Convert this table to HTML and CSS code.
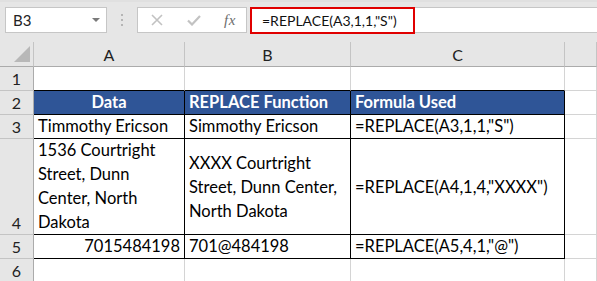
FILE: index.html
```html
<!DOCTYPE html>
<html lang="en">
<head>
<meta charset="utf-8">
<title>REPLACE function</title>
<link rel="stylesheet" href="styles.css">
</head>
<body>
<div class="toolbar">
  <div class="namebox">
    <span class="namebox-text">B3</span>
    <svg class="namebox-arrow" width="8" height="4" viewBox="0 0 8 4"><path d="M0 0H8L4 4Z" fill="#7a7a7a"/></svg>
  </div>
  <div class="grip">
    <svg width="3" height="12" viewBox="0 0 3 12"><rect x="0" y="0" width="2" height="2" fill="#b5b5b5"/><rect x="0" y="5" width="2" height="2" fill="#b5b5b5"/><rect x="0" y="10" width="2" height="2" fill="#b5b5b5"/></svg>
  </div>
  <div class="fbuttons">
    <svg class="fb-cancel" width="12" height="12" viewBox="0 0 12 12"><path d="M1 1L11 11M11 1L1 11" stroke="#c2c2c2" stroke-width="1.6" fill="none"/></svg>
    <svg class="fb-enter" width="14" height="11" viewBox="0 0 14 11"><path d="M1 5.5L5 9.5L13 1" stroke="#c2c2c2" stroke-width="2.2" fill="none"/></svg>
    <span class="fb-fx">fx</span>
  </div>
  <div class="formula">
    <div class="formula-edit">=REPLACE(A3,1,1,"S")</div>
  </div>
</div>

<div class="sheet">
  <div class="corner"><svg width="16" height="16" viewBox="0 0 16 16"><path d="M16 0V16H0Z" fill="#b8b8b8"/></svg></div>
  <div class="colhead">A</div>
  <div class="colhead">B</div>
  <div class="colhead">C</div>
  <div class="colhead"></div>

  <div class="rowhead">1</div>
  <div class="cell top-edge"></div>
  <div class="cell top-edge"></div>
  <div class="cell top-edge"></div>
  <div class="cell"></div>

  <div class="rowhead">2</div>
  <div class="cell tbl th center">Data</div>
  <div class="cell tbl th">REPLACE Function</div>
  <div class="cell tbl th">Formula Used</div>
  <div class="cell"></div>

  <div class="rowhead">3</div>
  <div class="cell tbl">Timmothy Ericson</div>
  <div class="cell tbl">Simmothy Ericson</div>
  <div class="cell tbl">=REPLACE(A3,1,1,"S")</div>
  <div class="cell"></div>

  <div class="rowhead">4</div>
  <div class="cell tbl wrap">1536 Courtright Street, Dunn Center, North Dakota</div>
  <div class="cell tbl wrap middle">XXXX Courtright Street, Dunn Center, North Dakota</div>
  <div class="cell tbl middle">=REPLACE(A4,1,4,"XXXX")</div>
  <div class="cell"></div>

  <div class="rowhead">5</div>
  <div class="cell tbl right">7015484198</div>
  <div class="cell tbl">701@484198</div>
  <div class="cell tbl">=REPLACE(A5,4,1,"@")</div>
  <div class="cell"></div>

  <div class="rowhead">6</div>
  <div class="cell"></div>
  <div class="cell"></div>
  <div class="cell"></div>
  <div class="cell"></div>
</div>
</body>
</html>
```

FILE: styles.css
```css
* { box-sizing: border-box; }

html, body {
  margin: 0;
  padding: 0;
  width: 597px;
  height: 281px;
  overflow: hidden;
  background: #e6e6e6;
  font-family: Lato, "Open Sans", sans-serif;
  font-size: 16.5px;
  color: #000;
}

/* ---------- formula bar ---------- */
.toolbar {
  height: 42px;
  display: flex;
  align-items: flex-start;
  padding: 7px 0 0 5px;
  border-top: 2px solid #e0e0e0;
}

.namebox {
  width: 102px;
  height: 26px;
  margin-top: -2px;
  background: #fff;
  border: 1px solid #c6c6c6;
  display: flex;
  align-items: center;
  justify-content: space-between;
  padding: 0 6px 0 7px;
}

.namebox-text { font-size: 15px; color: #222; }

.grip {
  width: 30px;
  height: 26px;
  margin-top: -2px;
  display: flex;
  align-items: center;
  justify-content: center;
}

.fbuttons {
  width: 110px;
  height: 26px;
  margin-top: -2px;
  background: #fff;
  border: 1px solid #c6c6c6;
  display: flex;
  align-items: center;
  padding: 0 0 0 13px;
}

.fb-enter { margin-left: 24px; }

.fb-fx {
  margin-left: 23px;
  font-family: "Liberation Serif", serif;
  font-style: italic;
  font-size: 15px;
  color: #6d6d6d;
  letter-spacing: 0.5px;
}

.formula {
  flex: 1;
  height: 26px;
  margin-top: -2px;
  margin-left: 3px;
  background: #fff;
  border-top: 1px solid #c6c6c6;
  border-bottom: 1px solid #c6c6c6;
}

.formula-edit {
  width: 165px;
  height: 27px;
  margin-top: -1px;
  border: 2px solid #e00000;
  padding: 0 0 0 10px;
  font-size: 14px;
  line-height: 23px;
  color: #111;
}

/* ---------- worksheet grid ---------- */
.sheet {
  display: grid;
  grid-template-columns: 34px 151px 166px 214px 1fr;
  grid-template-rows: 25px 24px 24px 24px 96px 24px 24px;
  background: #fff;
}

.corner,
.colhead {
  background: #e6e6e6;
  border-right: 1px solid #c4c4c4;
  border-bottom: 1px solid #ababab;
}

.corner {
  display: flex;
  align-items: flex-end;
  justify-content: flex-end;
  padding: 0 3px 4px 0;
}

.colhead {
  display: flex;
  align-items: flex-end;
  justify-content: center;
  padding-bottom: 2px;
  font-size: 16px;
  color: #222;
}

.rowhead {
  background: #e6e6e6;
  border-right: 1px solid #ababab;
  border-bottom: 1px solid #c4c4c4;
  display: flex;
  align-items: flex-end;
  justify-content: center;
  padding-bottom: 0;
  font-size: 16px;
  line-height: 23px;
  color: #222;
}

.cell {
  border-right: 1px solid #d4d4d4;
  border-bottom: 1px solid #d4d4d4;
  display: flex;
  align-items: flex-end;
  padding: 0 4px;
  white-space: nowrap;
  line-height: 24px;
}

.top-edge { border-bottom-color: #000; }

.tbl {
  border-right-color: #000;
  border-bottom-color: #000;
}

.th {
  background: #2f5597;
  color: #fff;
  font-weight: bold;
}

.center { justify-content: center; }
.right { justify-content: flex-end; }
.middle { align-items: center; }

.wrap { white-space: normal; }
```
